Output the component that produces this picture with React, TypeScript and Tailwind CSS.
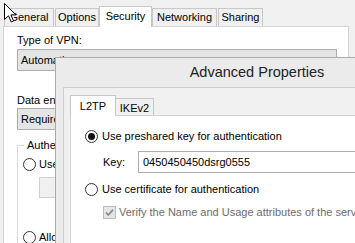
import React from "react";

const Radio = ({ checked = false }: { checked?: boolean }) => (
  <svg width="13" height="13" viewBox="0 0 13 13" className="shrink-0">
    <circle cx="6.5" cy="6.5" r="6" fill="#ffffff" stroke="#333333" strokeWidth="1" />
    {checked && <circle cx="6.5" cy="6.5" r="3.5" fill="#111111" />}
  </svg>
);

const Cursor = () => (
  <svg width="13" height="20" viewBox="0 0 13 20" className="absolute left-[4px] top-[3px] z-50">
    <path
      d="M0.5 0.5 L0.5 16.5 L4.5 12.8 L7.3 19 L9.6 18 L6.9 11.9 L12 11.9 Z"
      fill="#ffffff"
      stroke="#000000"
      strokeWidth="1"
      strokeLinejoin="miter"
    />
  </svg>
);

const BackTab = ({ label, width, selected = false, gap = 0 }: { label: string; width: string; selected?: boolean; gap?: number }) => (
  <div
    className={
      selected
        ? `relative z-10 -mb-px flex h-[21px] items-start justify-center border border-b-0 border-[#c8c8c8] bg-white pt-[2px] ${width}`
        : `flex h-[18px] items-center justify-center border border-b-0 border-[#c8c8c8] bg-[#f0f0f0] ${width} ${gap ? "ml-[1px]" : ""}`
    }
  >
    {label}
  </div>
);

export default function App() {
  return (
    <div className="relative h-[243px] w-[355px] overflow-hidden bg-[#f0f0f0] font-['Liberation_Sans',Arial,sans-serif] text-[11px] leading-[15px] text-black">
      {/* VPN properties dialog (behind) */}
      <div className="flex flex-col pt-[6px]">
        <div className="flex items-end pl-[4px]">
          <BackTab label="General" width="w-[50px]" />
          <BackTab label="Options" width="w-[44px]" gap={1} />
          <BackTab label="Security" width="w-[53px]" selected />
          <BackTab label="Networking" width="w-[65px]" />
          <BackTab label="Sharing" width="w-[45px]" gap={1} />
        </div>
        <div className="ml-[3px] h-[230px] w-[346px] border border-[#d4d4d4] bg-white pl-[13px] pt-[6px]">
          <div className="whitespace-nowrap">Type of VPN:</div>
          <div className="mt-[1px] flex h-[22px] w-[320px] items-center border border-[#adadad] bg-[#e5e5e5] pl-[3px]">
            Automatic
          </div>
          <div className="mt-[22px] whitespace-nowrap">Data encryption:</div>
          <div className="flex h-[22px] w-[320px] items-center whitespace-nowrap border border-[#adadad] bg-[#e5e5e5] pl-[3px]">
            Require encryption (disconnect if server declines)
          </div>
          <fieldset className="mt-[8px] h-[120px] w-[320px] border border-[#d9d9d9] px-[5px]">
            <legend className="ml-[1px] px-[3px]">Authentication</legend>
            <div className="mt-[4px] flex h-[15px] items-center gap-[3px] whitespace-nowrap">
              <Radio />
              <span>Use Extensible Authentication Protocol (EAP)</span>
            </div>
            <div className="ml-[16px] mt-[5px] h-[21px] w-[200px] border border-[#d0d0d0] bg-[#f0f0f0]" />
            <div className="mt-[32px] flex h-[15px] items-center gap-[3px] whitespace-nowrap">
              <Radio />
              <span>Allow these protocols</span>
            </div>
          </fieldset>
        </div>
      </div>

      {/* Advanced Properties window (front) */}
      <div className="absolute left-[55px] top-[57px] z-20 flex h-[260px] w-[404px] flex-col border border-[#ababab] bg-[#ebebeb] pl-[7px]">
        <div className="flex h-[29px] shrink-0 items-center justify-center pr-[7px] text-[14.5px] text-[#222222]">
          Advanced Properties
        </div>
        <div className="flex-1 border-l border-t border-[#cfcfcf] bg-[#f0f0f0] pl-[6px] pt-[7px]">
          <div className="flex items-end">
            <div className="relative z-10 -mb-px flex h-[21px] w-[46px] items-center justify-center border border-b-0 border-[#c8c8c8] bg-white">
              L2TP
            </div>
            <div className="flex h-[17px] w-[38px] items-center justify-center border border-b-0 border-l-0 border-[#c8c8c8] bg-[#f0f0f0] pt-[2px]">
              IKEv2
            </div>
          </div>
          <div className="h-[200px] border border-[#d4d4d4] bg-white pl-[14px] pt-[13px]">
            <div className="flex h-[15px] items-center gap-[4px] whitespace-nowrap">
              <Radio checked />
              <span>Use preshared key for authentication</span>
            </div>
            <div className="ml-[18px] mt-[7px] flex items-center whitespace-nowrap">
              <span className="w-[35px]">Key:</span>
              <div className="flex h-[22px] w-[300px] items-center border border-[#abadb3] bg-white pl-[4px]">
                0450450450dsrg0555
              </div>
            </div>
            <div className="mt-[9px] flex h-[15px] items-center gap-[4px] whitespace-nowrap">
              <Radio />
              <span>Use certificate for authentication</span>
            </div>
            <div className="ml-[18px] mt-[8px] flex h-[15px] items-center gap-[3px] whitespace-nowrap text-[#6d6d6d]">
              <svg width="13" height="13" viewBox="0 0 13 13" className="shrink-0">
                <rect x="0.5" y="0.5" width="12" height="12" fill="#e6e6e6" stroke="#bcbcbc" />
                <path d="M3 6.5 L5.3 9 L10 3.8" fill="none" stroke="#8a8a8a" strokeWidth="1.8" />
              </svg>
              <span>Verify the Name and Usage attributes of the server's certificate</span>
            </div>
          </div>
        </div>
      </div>

      <Cursor />
    </div>
  );
}
